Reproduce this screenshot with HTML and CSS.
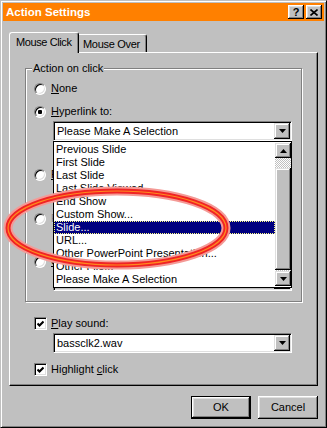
FILE: index.html
```html
<!DOCTYPE html>
<html lang="en">
<head>
<meta charset="UTF-8">
<meta name="viewport" content="width=device-width, initial-scale=1.0">
<title>Action Settings</title>
<link rel="stylesheet" href="styles.css">
</head>
<body>
<div class="window">
  <div class="titlebar">
    <span class="title">Action Settings</span>
    <div class="caption-btns">
      <span class="cap-btn">?</span>
      <span class="cap-btn"><svg width="8" height="7" viewBox="0 0 8 7"><path d="M0.5 0.5L7.5 6.5M7.5 0.5L0.5 6.5" stroke="#000" stroke-width="1.6"/></svg></span>
    </div>
  </div>

  <div class="client">
    <div class="tabs">
      <div class="tab active">Mouse Click</div>
      <div class="tab">Mouse Over</div>
    </div>

    <div class="panel">
      <fieldset class="group">
        <legend>Action on click</legend>
        <div class="group-body">
          <div class="opt"><span class="radio"></span><span><u>N</u>one</span></div>
          <div class="opt mt10"><span class="radio on"></span><span><u>H</u>yperlink to:</span></div>
          <div class="combo open mt3">
            <span class="combo-text">Please Make A Selection</span>
            <span class="drop-btn"><svg width="7" height="4" viewBox="0 0 7 4"><path d="M0 0H7L3.5 4Z"/></svg></span>
            <div class="listbox">
              <ul class="items">
                <li>Previous Slide</li>
                <li>First Slide</li>
                <li>Last Slide</li>
                <li>Last Slide Viewed</li>
                <li>End Show</li>
                <li>Custom Show...</li>
                <li class="sel">Slide...</li>
                <li>URL...</li>
                <li>Other PowerPoint Presentation...</li>
                <li>Other File...</li>
                <li>Please Make A Selection</li>
              </ul>
              <div class="vscroll">
                <span class="sb-btn"><svg width="7" height="4" viewBox="0 0 7 4"><path d="M0 4H7L3.5 0Z"/></svg></span>
                <div class="track"><span class="thumb"></span></div>
                <span class="sb-btn"><svg width="7" height="4" viewBox="0 0 7 4"><path d="M0 0H7L3.5 4Z"/></svg></span>
              </div>
            </div>
          </div>

          <!-- rows below are covered by the open list -->
          <div class="opt mt27"><span class="radio"></span><span class="hidden-label"><u>R</u>un program:</span></div>
          <div class="field-row mt3">
            <span class="field"></span>
            <span class="btn small"></span>
          </div>
          <div class="opt mt8"><span class="radio"></span><span class="hidden-label grey">Run <u>m</u>acro:</span></div>
          <div class="combo off mt3">
            <span class="combo-text"></span>
            <span class="drop-btn"><svg width="7" height="4" viewBox="0 0 7 4"><path d="M0 0H7L3.5 4Z"/></svg></span>
          </div>
          <div class="opt mt7"><span class="radio"></span><span class="hidden-label"><u>O</u>bject action:</span></div>
          <div class="combo off mt3">
            <span class="combo-text"></span>
            <span class="drop-btn"><svg width="7" height="4" viewBox="0 0 7 4"><path d="M0 0H7L3.5 4Z"/></svg></span>
          </div>
        </div>
      </fieldset>

      <div class="lower">
        <div class="opt chk-row mt15"><span class="check"><svg width="7" height="7" viewBox="0 0 7 7"><polyline points="0.5,3.4 2.5,5.4 6.5,1.4" fill="none" stroke="#000" stroke-width="2.1"/></svg></span><span><u>P</u>lay sound:</span></div>
        <div class="combo mt3">
          <span class="combo-text">bassclk2.wav</span>
          <span class="drop-btn"><svg width="7" height="4" viewBox="0 0 7 4"><path d="M0 0H7L3.5 4Z"/></svg></span>
        </div>
        <div class="opt chk-row mt10"><span class="check"><svg width="7" height="7" viewBox="0 0 7 7"><polyline points="0.5,3.4 2.5,5.4 6.5,1.4" fill="none" stroke="#000" stroke-width="2.1"/></svg></span><span>Highlight <u>c</u>lick</span></div>
      </div>
    </div>

    <div class="buttons">
      <span class="btn default">OK</span>
      <span class="btn">Cancel</span>
    </div>
  </div>

  <!-- hand drawn marker round the "Slide..." entry -->
  <svg class="marker" width="327" height="428" viewBox="0 0 327 428">
    <ellipse cx="117" cy="228" rx="109" ry="37" fill="none" stroke="#f49a96" stroke-width="9"/>
    <ellipse cx="117" cy="228" rx="109" ry="37" fill="none" stroke="#f02424" stroke-width="5"/>
    <ellipse cx="117" cy="228" rx="109" ry="37" fill="none" stroke="#ff8a1e" stroke-width="1.2"/>
  </svg>
</div>
</body>
</html>
```

FILE: styles.css
```css
* { box-sizing: border-box; }

body {
  margin: 0;
  background: #c0c0c0;
  font-family: "Liberation Sans", Arial, sans-serif;
  font-size: 11px;
  line-height: 13px;
  color: #000;
}

.window {
  position: relative;
  width: 327px;
  height: 428px;
  padding: 2px;
  display: flex;
  flex-direction: column;
  background: #c0c0c0;
  border: 1px solid;
  border-color: #c0c0c0 #000 #000 #c0c0c0;
  box-shadow: inset 1px 1px #fff, inset -1px -1px #808080;
}

/* title bar */
.titlebar {
  height: 18px;
  flex: none;
  display: flex;
  align-items: center;
  justify-content: space-between;
  padding: 0 2px 0 3px;
  background: #ff8000;
}
.title { color: #fff; font-weight: bold; font-size: 11.5px; }
.caption-btns { display: flex; gap: 2px; }
.cap-btn {
  width: 16px;
  height: 14px;
  display: flex;
  align-items: center;
  justify-content: center;
  background: #c0c0c0;
  font-weight: bold;
  font-size: 11px;
  box-shadow: inset -1px -1px #000, inset 1px 1px #fff, inset -2px -2px #808080, inset 2px 2px #dfdfdf;
}

.client {
  flex: 1;
  display: flex;
  flex-direction: column;
  padding: 11px 6px 0;
}

/* tabs */
.tabs { display: flex; align-items: flex-end; height: 20px; flex: none; }
.tab {
  height: 18px;
  width: 68px;
  padding: 3px 0 0 4px;
  background: #c0c0c0;
  border-top: 1px solid #fff;
  border-right: 1px solid #000;
  border-radius: 0 3px 0 0;
  box-shadow: inset -1px 0 #808080;
  white-space: nowrap;
  letter-spacing: -0.3px;
}
.tab.active {
  position: relative;
  z-index: 1;
  width: 70px;
  height: 21px;
  margin-bottom: -1px;
  padding-left: 6px;
  border-left: 1px solid #fff;
  border-radius: 3px 3px 0 0;
  letter-spacing: -0.4px;
}

.panel {
  height: 334px;
  flex: none;
  border: 1px solid;
  border-color: #fff #000 #000 #fff;
  box-shadow: inset -1px -1px #808080;
}

/* group box */
.group {
  margin: 9px 0 0 15px;
  width: 277px;
  min-width: 0;
  padding: 7px 0 10px 0;
  border: 1px solid #808080;
  box-shadow: 1px 1px #fff, inset 1px 1px #fff;
}
.group legend {
  margin-left: 6px;
  padding: 0 1px;
  background: #c0c0c0;
}
.group-body { padding-left: 8px; }
.lower { padding-left: 24px; }

.opt { display: flex; align-items: center; height: 13px; gap: 5px; white-space: nowrap; }
.opt.chk-row { gap: 4px; }
.grey { color: #808080; text-shadow: 1px 1px #fff; }
.hidden-label { width: 3px; overflow: hidden; }

.mt3 { margin-top: 3px; }
.mt7 { margin-top: 7px; }
.mt8 { margin-top: 8px; }
.mt10 { margin-top: 10px; }
.mt15 { margin-top: 15px; }
.mt27 { margin-top: 27px; }

.radio {
  position: relative;
  width: 12px;
  height: 12px;
  flex: none;
  border-radius: 50%;
  background: #fff;
  border: 1px solid;
  border-color: #808080 #fff #fff #808080;
  box-shadow: inset 1px 1px #000, inset -1px -1px #dfdfdf;
}
.radio.on::after {
  content: "";
  position: absolute;
  left: 3px;
  top: 3px;
  width: 4px;
  height: 4px;
  border-radius: 1px;
  background: #000;
}

.check {
  width: 13px;
  height: 13px;
  flex: none;
  display: flex;
  align-items: center;
  justify-content: center;
  background: #fff;
  border: 1px solid;
  border-color: #808080 #fff #fff #808080;
  box-shadow: inset 1px 1px #000, inset -1px -1px #dfdfdf;
}

/* combo boxes */
.combo {
  display: flex;
  align-items: center;
  width: 239px;
  height: 20px;
  margin-left: 19px;
  padding: 1px;
  background: #fff;
  border: 1px solid;
  border-color: #808080 #fff #fff #808080;
  box-shadow: inset 1px 1px #000, inset -1px -1px #dfdfdf;
}
.combo.off { background: #c0c0c0; }
.combo.open { position: relative; }
.combo-text { flex: 1; padding-left: 2px; white-space: nowrap; }
.drop-btn, .sb-btn {
  width: 16px;
  height: 16px;
  flex: none;
  display: flex;
  align-items: center;
  justify-content: center;
  background: #c0c0c0;
  box-shadow: inset -1px -1px #000, inset 1px 1px #dfdfdf, inset -2px -2px #808080, inset 2px 2px #fff;
}

.field-row { display: flex; gap: 6px; margin-left: 19px; }
.field {
  width: 170px;
  height: 20px;
  background: #c0c0c0;
  border: 1px solid;
  border-color: #808080 #fff #fff #808080;
  box-shadow: inset 1px 1px #000, inset -1px -1px #dfdfdf;
}

/* dropped list */
.listbox {
  position: absolute;
  z-index: 5;
  top: 19px;
  left: -1px;
  width: 239px;
  height: 147px;
  display: flex;
  padding: 1px 0;
  background: #fff;
  border: 1px solid #000;
}
.items { flex: 1; margin: 0; padding: 0; list-style: none; min-width: 0; }
.items li { height: 13px; padding-left: 2px; white-space: nowrap; overflow: hidden; }
.items li.sel {
  background: #000080;
  color: #fff;
  outline: 1px dotted #ffff80;
  outline-offset: -1px;
}
.vscroll { width: 16px; display: flex; flex-direction: column; }
.sb-btn { height: 15px; }
.track {
  flex: 1;
  padding-top: 10px;
  background: repeating-conic-gradient(#c0c0c0 0 25%, #fff 0 50%) 0 0 / 2px 2px;
}
.thumb {
  display: block;
  height: 102px;
  background: #c0c0c0;
  box-shadow: inset -1px -1px #000, inset 1px 1px #dfdfdf, inset -2px -2px #808080, inset 2px 2px #fff;
}

/* buttons */
.buttons { display: flex; justify-content: flex-end; gap: 7px; margin-top: 10px; }
.btn {
  width: 60px;
  height: 23px;
  display: flex;
  align-items: center;
  justify-content: center;
  background: #c0c0c0;
  box-shadow: inset -1px -1px #000, inset 1px 1px #fff, inset -2px -2px #808080, inset 2px 2px #dfdfdf;
}
.btn.default {
  border: 1px solid #000;
  box-shadow: inset -1px -1px #000, inset 1px 1px #fff, inset -2px -2px #808080, inset 2px 2px #dfdfdf;
}
.btn.small { width: 63px; height: 20px; }

.marker {
  position: absolute;
  z-index: 10;
  top: -1px;
  left: -1px;
  pointer-events: none;
}
```
